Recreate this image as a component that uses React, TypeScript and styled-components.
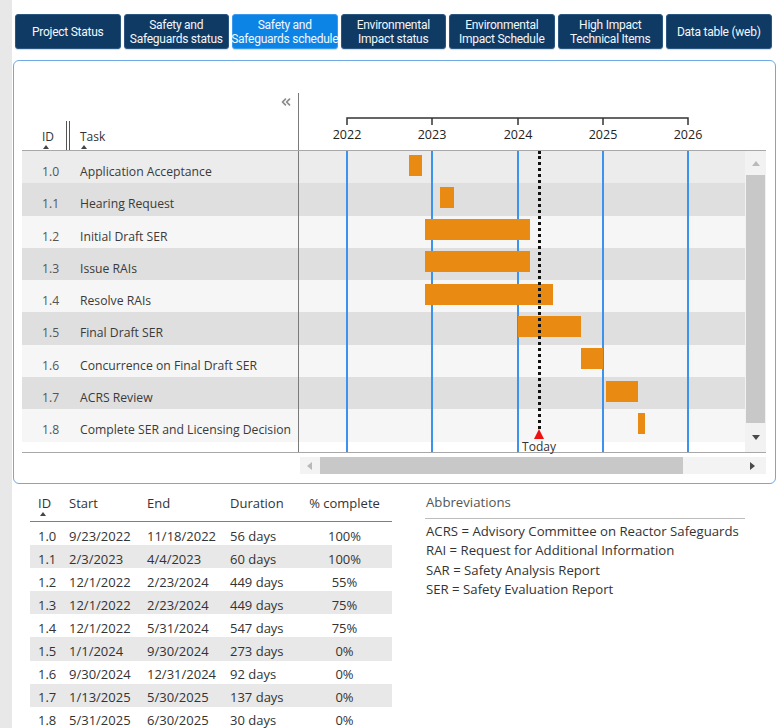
import React from "react";
import styled, { createGlobalStyle } from "styled-components";
import { ChevronsLeft } from "lucide-react";

const GlobalStyle = createGlobalStyle`
  html, body { margin: 0; padding: 0; background: #ffffff; }
  body {
    font-family: "Open Sans", "Noto Sans", sans-serif;
    color: #333333;
    overflow: hidden;
  }
`;

type Task = {
  id: string;
  name: string;
  start: string;
  end: string;
  startLabel: string;
  endLabel: string;
  duration: string;
  complete: string;
};

const TASKS: Task[] = [
  { id: "1.0", name: "Application Acceptance", start: "2022-09-23", end: "2022-11-18", startLabel: "9/23/2022", endLabel: "11/18/2022", duration: "56 days", complete: "100%" },
  { id: "1.1", name: "Hearing Request", start: "2023-02-03", end: "2023-04-04", startLabel: "2/3/2023", endLabel: "4/4/2023", duration: "60 days", complete: "100%" },
  { id: "1.2", name: "Initial Draft SER", start: "2022-12-01", end: "2024-02-23", startLabel: "12/1/2022", endLabel: "2/23/2024", duration: "449 days", complete: "55%" },
  { id: "1.3", name: "Issue RAIs", start: "2022-12-01", end: "2024-02-23", startLabel: "12/1/2022", endLabel: "2/23/2024", duration: "449 days", complete: "75%" },
  { id: "1.4", name: "Resolve RAIs", start: "2022-12-01", end: "2024-05-31", startLabel: "12/1/2022", endLabel: "5/31/2024", duration: "547 days", complete: "75%" },
  { id: "1.5", name: "Final Draft SER", start: "2024-01-01", end: "2024-09-30", startLabel: "1/1/2024", endLabel: "9/30/2024", duration: "273 days", complete: "0%" },
  { id: "1.6", name: "Concurrence on Final Draft SER", start: "2024-09-30", end: "2024-12-31", startLabel: "9/30/2024", endLabel: "12/31/2024", duration: "92 days", complete: "0%" },
  { id: "1.7", name: "ACRS Review", start: "2025-01-13", end: "2025-05-30", startLabel: "1/13/2025", endLabel: "5/30/2025", duration: "137 days", complete: "0%" },
  { id: "1.8", name: "Complete SER and Licensing Decision", start: "2025-05-31", end: "2025-06-30", startLabel: "5/31/2025", endLabel: "6/30/2025", duration: "30 days", complete: "0%" },
];

const TABS: { label: React.ReactNode; active?: boolean }[] = [
  { label: "Project Status" },
  { label: <>Safety and<br />Safeguards status</> },
  { label: <>Safety and<br />Safeguards schedule</>, active: true },
  { label: <>Environmental<br />Impact status</> },
  { label: <>Environmental<br />Impact Schedule</> },
  { label: <>High Impact<br />Technical Items</> },
  { label: "Data table (web)" },
];

const ABBREVIATIONS = [
  "ACRS = Advisory Committee on Reactor Safeguards",
  "RAI = Request for Additional Information",
  "SAR = Safety Analysis Report",
  "SER = Safety Evaluation Report",
];

const YEARS = [2022, 2023, 2024, 2025, 2026];
const TODAY = "2024-04-02";

// timeline scale: pixels from the chart's left edge
const AXIS_ORIGIN = 48;
const YEAR_WIDTH = 85.25;

function yearFraction(iso: string): number {
  const [y, m, d] = iso.split("-").map(Number);
  const t = Date.UTC(y, m - 1, d);
  const start = Date.UTC(y, 0, 1);
  const next = Date.UTC(y + 1, 0, 1);
  return y + (t - start) / (next - start);
}

function xOf(iso: string): number {
  return AXIS_ORIGIN + (yearFraction(iso) - 2022) * YEAR_WIDTH;
}

function xOfYear(year: number): number {
  return Math.round(AXIS_ORIGIN + (year - 2022) * YEAR_WIDTH);
}

/* ---------- page frame ---------- */

const Page = styled.div`
  display: flex;
  min-height: 728px;
`;

const SideStrip = styled.div`
  width: 12px;
  flex: none;
  background: #e8e8e8;
`;

const Main = styled.div`
  flex: 1;
  display: flex;
  flex-direction: column;
  padding: 14px 0 0 1px;
`;

/* ---------- navigation tabs ---------- */

const TabBar = styled.nav`
  display: flex;
  gap: 3px;
  margin-left: 2px;
  height: 35px;
`;

const Tab = styled.button<{ $active?: boolean }>`
  width: 105.5px;
  flex: none;
  box-sizing: border-box;
  display: flex;
  align-items: center;
  justify-content: center;
  padding: 0;
  border: 1px solid ${(p) => (p.$active ? "#3a9af0" : "#2b5680")};
  border-radius: 3px;
  background: ${(p) => (p.$active ? "#0c84e6" : "#0f3a63")};
  color: #f4f7fb;
  font-family: Roboto, "Liberation Sans", sans-serif;
  font-size: 12px;
  line-height: 14px;
  letter-spacing: -0.25px;
  text-align: center;
  white-space: nowrap;
  box-shadow: 0 1px 1px rgba(0, 0, 0, 0.15);
`;

/* ---------- gantt card ---------- */

const Card = styled.section`
  margin-top: 11px;
  width: 763px;
  height: 424px;
  box-sizing: border-box;
  border: 1px solid #6ea9e3;
  border-radius: 6px;
  padding: 0 9px 0 8px;
  display: flex;
  flex-direction: column;
`;

const GanttHead = styled.div`
  display: flex;
  height: 90px;
  box-sizing: border-box;
  border-bottom: 1px solid #a8a8a8;
`;

const LabelHead = styled.div`
  width: 276px;
  flex: none;
  display: flex;
  flex-direction: column;
`;

const CollapseButton = styled.span`
  align-self: flex-end;
  margin: 34px 5px 0 0;
  display: flex;
  color: #8c8c8c;
`;

const ColumnLabels = styled.div`
  margin-top: auto;
  height: 29px;
  display: flex;
  align-items: stretch;
  font-size: 12px;
  color: #333;
`;

const ColumnLabel = styled.div<{ $width?: number; $pad: number }>`
  ${(p) => (p.$width ? `width: ${p.$width}px; flex: none;` : "flex: 1;")}
  padding: 8px 0 0 ${(p) => p.$pad}px;
  box-sizing: border-box;
  line-height: 15px;
`;

const SortCaret = styled.span<{ $offset?: number }>`
  display: block;
  width: 0;
  height: 0;
  margin: 1px 0 0 ${(p) => p.$offset ?? 1}px;
  border-left: 3.5px solid transparent;
  border-right: 3.5px solid transparent;
  border-bottom: 4px solid #444;
`;

const ResizeGrip = styled.div`
  width: 4px;
  flex: none;
  border-left: 1.5px solid #555;
  border-right: 1.5px solid #555;
  box-sizing: border-box;
`;

const AxisHead = styled.div`
  align-self: flex-end;
  height: 57px;
  flex: 1;
  border-left: 1px solid #7a7a7a;
`;

const GanttBody = styled.div`
  display: flex;
  height: 302px;
  box-sizing: border-box;
  border-bottom: 1px solid #a8a8a8;
`;

const LabelColumn = styled.div`
  width: 276px;
  flex: none;
`;

const rowTone = (i: number) => (i === 0 ? "#ececec" : i % 2 === 1 ? "#dfdfdf" : "#f6f6f6");

const LabelRow = styled.div<{ $index: number }>`
  height: 32.3px;
  display: flex;
  align-items: flex-start;
  padding-top: 13px;
  box-sizing: border-box;
  background: ${(p) => rowTone(p.$index)};
  font-size: 12.2px;
  line-height: 15px;
`;

const RowId = styled.span`
  width: 58px;
  flex: none;
  padding-left: 20px;
  box-sizing: border-box;
  color: #555;
`;

const RowName = styled.span`
  color: #3a3a3a;
  white-space: nowrap;
`;

const ChartColumn = styled.div`
  width: 446px;
  flex: none;
  position: relative;
  border-left: 1px solid #7a7a7a;
`;

const ChartRow = styled.div<{ $index: number }>`
  position: relative;
  height: 32.3px;
  background: ${(p) => rowTone(p.$index)};
`;

const Bar = styled.div`
  position: absolute;
  z-index: 2;
  top: 3.5px;
  height: 21px;
  background: #e98a12;
`;

const GridLine = styled.div`
  position: absolute;
  z-index: 1;
  top: 0;
  bottom: 0;
  width: 1.5px;
  background: #3b93ee;
`;

const TodayMarker = styled.div`
  position: absolute;
  z-index: 3;
  top: 0;
  width: 0;
  display: flex;
  flex-direction: column;
  align-items: center;
`;

const TodayLine = styled.div`
  height: 278px;
  border-left: 3px dotted #111;
`;

const TodayPin = styled.div`
  width: 0;
  height: 0;
  border-left: 5.5px solid transparent;
  border-right: 5.5px solid transparent;
  border-bottom: 10px solid #ee1111;
`;

const TodayLabel = styled.span`
  margin-top: 1px;
  font-size: 12px;
  line-height: 14px;
  color: #333;
  white-space: nowrap;
`;

const VScroll = styled.div`
  width: 21px;
  flex: none;
  display: flex;
  flex-direction: column;
  align-items: center;
  padding-top: 10px;
  box-sizing: border-box;
  background: #f2f2f2;
`;

const Arrow = styled.span<{ $dir: "up" | "down" | "left" | "right"; $muted?: boolean }>`
  width: 0;
  height: 0;
  flex: none;
  ${(p) => {
    const c = p.$muted ? "#b9b9b9" : "#4a4a4a";
    switch (p.$dir) {
      case "up":
        return `border-left: 4.5px solid transparent; border-right: 4.5px solid transparent; border-bottom: 5px solid ${c};`;
      case "down":
        return `border-left: 4.5px solid transparent; border-right: 4.5px solid transparent; border-top: 5px solid ${c};`;
      case "left":
        return `border-top: 4.5px solid transparent; border-bottom: 4.5px solid transparent; border-right: 5px solid ${c};`;
      default:
        return `border-top: 4.5px solid transparent; border-bottom: 4.5px solid transparent; border-left: 5px solid ${c};`;
    }
  }}
`;

const VThumb = styled.div`
  width: 19px;
  height: 248px;
  margin: 9px 0 12px;
  background: #c8c8c8;
`;

const HScrollRow = styled.div`
  display: flex;
  padding: 4px 0 0 278px;
`;

const HScroll = styled.div`
  width: 466px;
  height: 17px;
  display: flex;
  align-items: center;
  padding: 0 8px 0 7px;
  box-sizing: border-box;
  background: #f3f3f3;
`;

const HThumb = styled.div`
  width: 363px;
  height: 17px;
  margin: 0 67px 0 8px;
  background: #c8c8c8;
`;

/* ---------- lower section ---------- */

const Lower = styled.div`
  display: flex;
  align-items: flex-start;
`;

const DataTable = styled.div`
  width: 362px;
  margin-left: 17px;
  font-size: 13px;
  color: #333;
`;

const tableColumns = "39px 78px 83px 79px 71px 12px";

const TableHead = styled.div`
  display: grid;
  grid-template-columns: ${tableColumns};
  height: 38px;
  box-sizing: border-box;
  padding-top: 11px;
  line-height: 16px;
  border-bottom: 1.5px solid #3a8fe4;
`;

const TableRow = styled.div<{ $striped: boolean }>`
  display: grid;
  grid-template-columns: ${tableColumns};
  height: 23.1px;
  box-sizing: border-box;
  padding-top: 5.5px;
  line-height: 16px;
  background: ${(p) => (p.$striped ? "#e8e8e8" : "transparent")};
`;

const Cell = styled.span<{ $center?: boolean; $pad?: number }>`
  white-space: nowrap;
  padding-left: ${(p) => p.$pad ?? 0}px;
  text-align: ${(p) => (p.$center ? "center" : "left")};
`;

const Abbreviations = styled.div`
  width: 320px;
  margin-left: 33px;
  font-size: 13.2px;
`;

const AbbrevTitle = styled.div`
  height: 35px;
  box-sizing: border-box;
  padding: 10px 0 0 1px;
  line-height: 16px;
  color: #555;
  border-bottom: 1px solid #bdbdbd;
`;

const AbbrevList = styled.ul`
  list-style: none;
  margin: 3px 0 0;
  padding: 0 0 0 1px;
  line-height: 19.3px;
  color: #333;
`;

/* ---------- pieces ---------- */

function TimeAxis() {
  return (
    <svg width="446" height="57" viewBox="0 0 446 57">
      <path
        d={`M${xOfYear(2022)} 32 V25 H${xOfYear(2026)} V32`}
        fill="none"
        stroke="#333"
        strokeWidth="1.5"
      />
      {YEARS.slice(1, 4).map((y) => (
        <line key={y} x1={xOfYear(y)} y1="25" x2={xOfYear(y)} y2="32" stroke="#333" strokeWidth="1.5" />
      ))}
      {YEARS.map((y) => (
        <text
          key={y}
          x={xOfYear(y)}
          y="45.5"
          textAnchor="middle"
          fontSize="12.5"
          fontFamily='"Open Sans", "Noto Sans", sans-serif'
          fill="#222"
        >
          {y}
        </text>
      ))}
    </svg>
  );
}

function Gantt() {
  const today = xOf(TODAY);
  return (
    <Card>
      <GanttHead>
        <LabelHead>
          <CollapseButton>
            <ChevronsLeft size={14} strokeWidth={3} />
          </CollapseButton>
          <ColumnLabels>
            <ColumnLabel $width={44} $pad={20}>
              ID
              <SortCaret $offset={1} />
            </ColumnLabel>
            <ResizeGrip />
            <ColumnLabel $pad={10}>
              Task
              <SortCaret $offset={1} />
            </ColumnLabel>
          </ColumnLabels>
        </LabelHead>
        <AxisHead>
          <TimeAxis />
        </AxisHead>
      </GanttHead>

      <GanttBody>
        <LabelColumn>
          {TASKS.map((t, i) => (
            <LabelRow key={t.id} $index={i}>
              <RowId>{t.id}</RowId>
              <RowName>{t.name}</RowName>
            </LabelRow>
          ))}
        </LabelColumn>
        <ChartColumn>
          {TASKS.map((t, i) => {
            const left = xOf(t.start);
            const width = xOf(t.end) - left;
            return (
              <ChartRow key={t.id} $index={i}>
                <Bar style={{ left, width }} />
              </ChartRow>
            );
          })}
          {YEARS.map((y) => (
            <GridLine key={y} style={{ left: xOfYear(y) - 1 }} />
          ))}
          <TodayMarker style={{ left: Math.round(today) }}>
            <TodayLine />
            <TodayPin />
            <TodayLabel>Today</TodayLabel>
          </TodayMarker>
        </ChartColumn>
        <VScroll>
          <Arrow $dir="up" $muted />
          <VThumb />
          <Arrow $dir="down" />
        </VScroll>
      </GanttBody>

      <HScrollRow>
        <HScroll>
          <Arrow $dir="left" $muted />
          <HThumb />
          <Arrow $dir="right" />
        </HScroll>
      </HScrollRow>
    </Card>
  );
}

function TaskTable() {
  return (
    <DataTable>
      <TableHead>
        <Cell $pad={8}>
          ID
          <SortCaret $offset={2} />
        </Cell>
        <Cell>Start</Cell>
        <Cell>End</Cell>
        <Cell>Duration</Cell>
        <Cell $center>% complete</Cell>
      </TableHead>
      {TASKS.map((t, i) => (
        <TableRow key={t.id} $striped={i % 2 === 1}>
          <Cell $pad={8}>{t.id}</Cell>
          <Cell>{t.startLabel}</Cell>
          <Cell>{t.endLabel}</Cell>
          <Cell>{t.duration}</Cell>
          <Cell $center>{t.complete}</Cell>
        </TableRow>
      ))}
    </DataTable>
  );
}

export default function App() {
  return (
    <>
      <GlobalStyle />
      <Page>
        <SideStrip />
        <Main>
          <TabBar>
            {TABS.map((tab, i) => (
              <Tab key={i} $active={tab.active}>
                <span>{tab.label}</span>
              </Tab>
            ))}
          </TabBar>
          <Gantt />
          <Lower>
            <TaskTable />
            <Abbreviations>
              <AbbrevTitle>Abbreviations</AbbrevTitle>
              <AbbrevList>
                {ABBREVIATIONS.map((a) => (
                  <li key={a}>{a}</li>
                ))}
              </AbbrevList>
            </Abbreviations>
          </Lower>
        </Main>
      </Page>
    </>
  );
}
